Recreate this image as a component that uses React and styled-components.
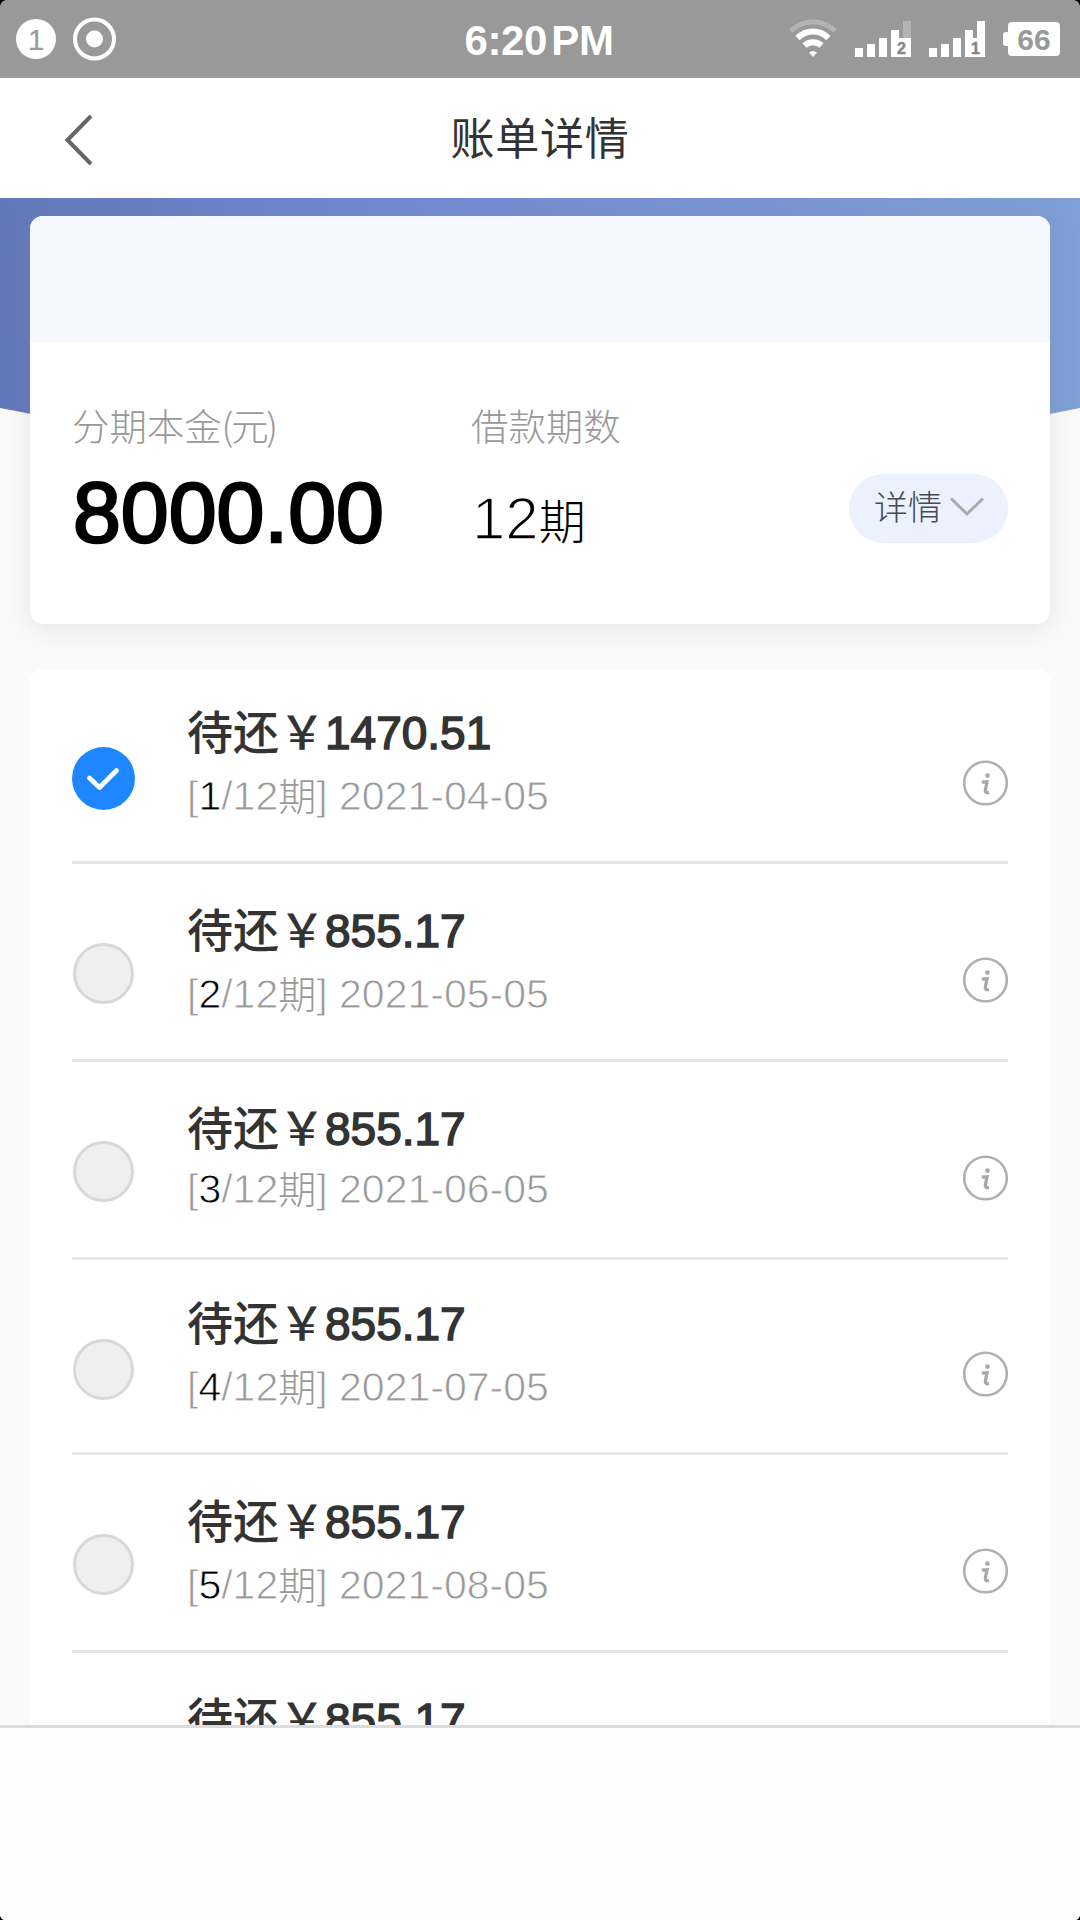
import styled, { createGlobalStyle } from "styled-components"

const GlobalStyle = createGlobalStyle`
    *{
        box-sizing: border-box;
        margin: 0;
        padding: 0;
    }
    body{
        background-color: #fff;
        font-family: "Liberation Sans", "Noto Sans CJK SC", sans-serif;
    }
`;

const Screen = styled.div`
    width: 1080px;
    height: 1920px;
    overflow: hidden;
    display: flex;
    flex-direction: column;
    background-color: #fafafa;
    position: relative;
`;

const Corner = styled.svg`
    position: absolute;
    width: 6px;
    height: 6px;
    top: ${({ $bottom }) => ($bottom ? "auto" : 0)};
    bottom: ${({ $bottom }) => ($bottom ? 0 : "auto")};
    left: ${({ $right }) => ($right ? "auto" : 0)};
    right: ${({ $right }) => ($right ? 0 : "auto")};
    transform: scale(${({ $right }) => ($right ? -1 : 1)}, ${({ $bottom }) => ($bottom ? -1 : 1)});
`;

const StatusBar = styled.div`
    height: 78px;
    flex: none;
    padding: 0 20px 0 16px;
    display: grid;
    grid-template-columns: 1fr auto 1fr;
    align-items: center;
    background-color: #999;
    color: #fff;
`;

const StatusLeft = styled.div`
    display: flex;
    align-items: center;
    gap: 17px;
`;

const Notice = styled.span`
    width: 40px;
    height: 40px;
    border-radius: 50%;
    background-color: #fff;
    color: #999;
    font-size: 30px;
    line-height: 41px;
    text-align: center;
`;

const Clock = styled.span`
    font-size: 42px;
    font-weight: 700;
    word-spacing: -7px;
    letter-spacing: -0.4px;
    line-height: 48px;
    padding: 3px 0 0 2px;
`;

const StatusRight = styled.div`
    display: flex;
    justify-content: flex-end;
    align-items: center;
    gap: 18px;
`;

const Battery = styled.span`
    width: 52px;
    height: 34px;
    margin-left: 5px;
    border-radius: 4px;
    background-color: #fff;
    color: #999;
    font-size: 30px;
    font-weight: 700;
    line-height: 36px;
    text-align: center;
    position: relative;
    &::before{
        content: "";
        position: absolute;
        left: -5px;
        top: 10px;
        width: 6px;
        height: 14px;
        border-radius: 3px 0 0 3px;
        background-color: #fff;
    }
`;

const Header = styled.header`
    height: 120px;
    flex: none;
    padding: 4px 64px 0;
    display: grid;
    grid-template-columns: 1fr auto 1fr;
    align-items: center;
    background-color: #fff;
`;

const Title = styled.h1`
    color: #333;
    font-size: 44px;
    font-weight: 400;
    line-height: 60px;
    letter-spacing: 0.8px;
`;

const Content = styled.main`
    flex: 1;
    overflow: hidden;
    position: relative;
    padding: 18px 30px 0;
`;

const Wave = styled.svg`
    position: absolute;
    top: 0;
    left: 0;
    width: 1080px;
    height: 250px;
`;

const Card = styled.section`
    height: 408px;
    border-radius: 13px;
    background-color: #fff;
    box-shadow: 0 4px 28px rgba(140, 125, 120, .18);
    overflow: hidden;
    position: relative;
`;

const CardTop = styled.div`
    height: 126px;
    background-color: #f5f9ff;
`;

const CardBody = styled.div`
    display: flex;
    align-items: flex-start;
    padding: 56px 42px 0 42px;
`;

const Field = styled.div`
    width: ${({ $width }) => $width}px;
`;

const Label = styled.p`
    color: #999;
    font-size: 37.4px;
    font-weight: 300;
    font-family: "Noto Sans CJK SC", sans-serif;
    line-height: 54px;
    white-space: nowrap;
    span{
        letter-spacing: -2.2px;
    }
`;

const Amount = styled.p`
    color: #000;
    font-size: 86px;
    line-height: 90px;
    margin: 15px 0 0 1px;
    -webkit-text-stroke: 2.6px #000;
`;

const Periods = styled.p`
    color: #000;
    font-size: 60px;
    line-height: 70px;
    margin: 32px 0 0 1px;
    display: flex;
    align-items: baseline;
    -webkit-text-stroke: 1.6px #fff;
    small{
        font-family: "Noto Sans CJK SC", sans-serif;
        font-size: 47px;
        font-weight: 300;
        -webkit-text-stroke: 0;
    }
`;

const DetailButton = styled.button`
    width: 159px;
    height: 69px;
    margin: 76px 0 0 auto;
    border: none;
    border-radius: 35px;
    background-color: #ebf2fe;
    color: #454b55;
    font-family: "Noto Sans CJK SC", sans-serif;
    font-size: 34px;
    font-weight: 300;
    line-height: 62px;
    display: flex;
    align-items: center;
    justify-content: center;
    gap: 8px;
    span{
        margin-top: -5px;
        margin-left: 1px;
    }
    svg{
        margin-top: -3px;
    }
`;

const List = styled.ul`
    list-style: none;
    margin-top: 45px;
    padding: 0 42px;
    border-radius: 13px;
    background-color: #fff;
    position: relative;
`;

const Row = styled.li`
    height: ${({ $height }) => $height}px;
    border-bottom: 3px solid #e5e5e5;
    display: flex;
    align-items: flex-start;
`;

const Radio = styled.span`
    width: 63px;
    height: 63px;
    flex: none;
    margin-top: 78px;
    display: grid;
    place-items: center;
`;

const Circle = styled.span`
    width: 61px;
    height: 61px;
    border-radius: 50%;
    border: 3px solid #d8d8d8;
    background-color: #efefef;
`;

const Bill = styled.div`
    flex: 1;
    margin-left: 52px;
    padding-top: ${({ $top }) => $top}px;
`;

const Due = styled.p`
    color: #333;
    font-size: 46px;
    line-height: 60px;
    display: flex;
    align-items: baseline;
    -webkit-text-stroke: 1.5px #333;
    b{
        font-family: "Noto Sans CJK SC", sans-serif;
        font-weight: 500;
        -webkit-text-stroke: 0;
    }
`;

const When = styled.p`
    color: #999;
    font-size: 41px;
    line-height: 50px;
    margin-top: ${({ $gap }) => $gap}px;
    display: flex;
    align-items: baseline;
    white-space: pre;
    -webkit-text-stroke: 0.8px #fff;
    em{
        color: #000;
        font-style: normal;
    }
    small{
        font-family: "Noto Sans CJK SC", sans-serif;
        font-size: 38px;
        font-weight: 300;
        -webkit-text-stroke: 0;
    }
`;

const InfoSvg = styled.svg`
    flex: none;
    margin-top: ${({ $top }) => $top}px;
`;

const Footer = styled.footer`
    height: 195px;
    flex: none;
    border-top: 3px solid #dcdcdc;
    background-color: #fefefe;
`;

const bills = [
    { id: 1, amount: "1470.51", date: "2021-04-05", height: 195, top: 30, gap: 6, info: 91 },
    { id: 2, amount: "855.17", date: "2021-05-05", height: 198, top: 33, gap: 6, info: 93 },
    { id: 3, amount: "855.17", date: "2021-06-05", height: 198, top: 33, gap: 3, info: 93 },
    { id: 4, amount: "855.17", date: "2021-07-05", height: 195, top: 30, gap: 6, info: 91 },
    { id: 5, amount: "855.17", date: "2021-08-05", height: 198, top: 33, gap: 6, info: 93 },
]

const Record = () => (
    <svg width="44" height="44" viewBox="0 0 44 44" fill="none">
        <circle cx="21.500" cy="22" r="19.500" stroke="#fff" strokeWidth="4" />
        <circle cx="21.500" cy="22" r="8.500" fill="#fff" />
    </svg>
)

const Wifi = () => (
    <svg width="48" height="40" viewBox="0 0 48 40" fill="none" stroke="#fff" strokeWidth="6">
        <path d="M2 12C14 0 34 0 46 12" stroke="#b3b3b3" strokeWidth="5" />
        <path d="M8.500 19C17.500 10.300 30.500 10.300 39.500 19" />
        <path d="M15.500 26.500C20.300 22 27.700 22 32.500 26.500" />
        <path d="M20 33.500Q24 30.500 28 33.500L24 38Z" fill="#fff" stroke="none" />
    </svg>
)

const Signal = ({ sim, full }) => (
    <svg width="56" height="36" viewBox="0 0 56 36" fill="#fff">
        <rect x="48" width="8" height="36" fill={full ? "#fff" : "#b3b3b3"} />
        <path d="M0 27h8v9h-8zM12 23h8v13h-8zM24 17h8v19h-8zM36 9h8v27h-8zM40 17h16v19h-16z" />
        <text x="46.500" y="33" fontSize="16" fontWeight="700" fill="#888" stroke="#888" strokeWidth="0.500" textAnchor="middle">{sim}</text>
    </svg>
)

const Back = () => (
    <svg width="30" height="52" viewBox="0 0 30 52" fill="none" stroke="#666" strokeWidth="4">
        <path d="M27 2L3.500 26L27 50" />
    </svg>
)

const Info = ({ top }) => (
    <InfoSvg $top={top} width="45" height="46" viewBox="0 0 45 46" fill="none">
        <circle cx="22.500" cy="23" r="21.300" stroke="#b0b0b0" strokeWidth="2.600" />
        <circle cx="24.500" cy="15.600" r="2.300" fill="#a8a8a8" />
        <path d="M18.800 22.200L24 21.800L22.300 30.500Q22 33.500 26 32.300" stroke="#a8a8a8" strokeWidth="3.300" />
    </InfoSvg>
)

const Check = () => (
    <svg width="63" height="63" viewBox="0 0 63 63" fill="none">
        <circle cx="31.500" cy="31.500" r="31.500" fill="#1e87ff" />
        <path d="M17.500 31L27.500 40.500L44.500 23.500" stroke="#fff" strokeWidth="4.800" strokeLinecap="round" strokeLinejoin="round" />
    </svg>
)

const App = () => {
    return (
        <>
            <GlobalStyle />
            <Screen>
                <StatusBar>
                    <StatusLeft>
                        <Notice>1</Notice>
                        <Record />
                    </StatusLeft>
                    <Clock>6:20 PM</Clock>
                    <StatusRight>
                        <Wifi />
                        <Signal sim="2" />
                        <Signal sim="1" full />
                        <Battery>66</Battery>
                    </StatusRight>
                </StatusBar>
                <Header>
                    <Back />
                    <Title>账单详情</Title>
                </Header>
                <Content>
                    <Wave viewBox="0 0 1080 250">
                        <defs>
                            <linearGradient id="sky">
                                <stop offset="0" stopColor="#6278bb" />
                                <stop offset="0.350" stopColor="#7089d0" />
                                <stop offset="1" stopColor="#7f9fd6" />
                            </linearGradient>
                        </defs>
                        <path d="M0 0H1080V210Q540 320 0 210Z" fill="url(#sky)" />
                    </Wave>
                    <Card>
                        <CardTop />
                        <CardBody>
                            <Field $width={399}>
                                <Label>分期本金<span>(元)</span></Label>
                                <Amount>8000.00</Amount>
                            </Field>
                            <Field $width={200}>
                                <Label>借款期数</Label>
                                <Periods>12<small>期</small></Periods>
                            </Field>
                            <DetailButton>
                                <span>详情</span>
                                <svg width="34" height="20" viewBox="0 0 34 20" fill="none" stroke="#aaa" strokeWidth="3">
                                    <path d="M1 1.500L17 17L33 1.500" />
                                </svg>
                            </DetailButton>
                        </CardBody>
                    </Card>
                    <List>
                        {bills.map(bill => (
                            <Row key={bill.id} $height={bill.height}>
                                <Radio>{bill.id === 1 ? <Check /> : <Circle />}</Radio>
                                <Bill $top={bill.top}>
                                    <Due><b>待还￥</b>{bill.amount}</Due>
                                    <When $gap={bill.gap}>[<em>{bill.id}</em>/12<small>期</small>] {bill.date}</When>
                                </Bill>
                                <Info top={bill.info} />
                            </Row>
                        ))}
                        {/* next bill, still under the footer */}
                        <Row $height={198}>
                            <Radio />
                            <Bill $top={33}>
                                <Due><b>待还￥</b>855.17</Due>
                            </Bill>
                        </Row>
                    </List>
                </Content>
                <Footer />
                <Corner viewBox="0 0 6 6"><path d="M0 0H6Q1 1 0 6Z" /></Corner>
                <Corner $right viewBox="0 0 6 6"><path d="M0 0H6Q1 1 0 6Z" /></Corner>
                <Corner $bottom viewBox="0 0 6 6"><path d="M0 0H4Q1 1 0 4Z" /></Corner>
                <Corner $bottom $right viewBox="0 0 6 6"><path d="M0 0H4Q1 1 0 4Z" /></Corner>
            </Screen>
        </>
    )
}

export default App
